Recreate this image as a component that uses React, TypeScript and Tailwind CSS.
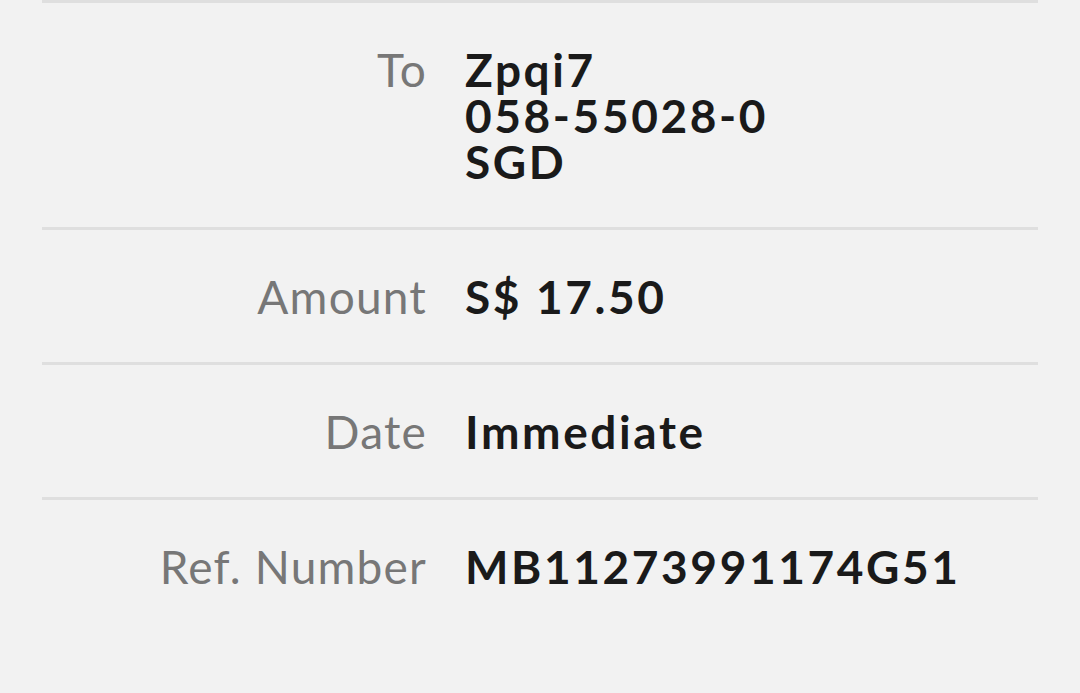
import React from "react";

const rows: { label: string; value: string[] }[] = [
  { label: "To", value: ["Zpqi7", "058-55028-0", "SGD"] },
  { label: "Amount", value: ["S$ 17.50"] },
  { label: "Date", value: ["Immediate"] },
  { label: "Ref. Number", value: ["MB11273991174G51"] },
];

export default function App() {
  return (
    <div
      className="w-[1080px] h-[693px] overflow-hidden bg-[#f2f2f2]"
      style={{ fontFamily: "Lato, 'Open Sans', sans-serif" }}
    >
      <div className="mx-[42px] w-[996px]">
        <div className="h-[3px] bg-[#dfdfdf]" />
        {rows.map((r) => (
          <div key={r.label}>
            <div className="flex gap-[38px] pt-[44px] pb-[42px]">
              <div className="w-[385px] shrink-0 text-right text-[46px] leading-[46px] tracking-[1.2px] text-[#777777]">
                {r.label}
              </div>
              <div className="text-[46px] leading-[46px] tracking-[2.6px] font-bold text-[#1a1a1a]">
                {r.value.map((v) => (
                  <div key={v}>{v}</div>
                ))}
              </div>
            </div>
            {r.label !== "Ref. Number" && <div className="h-[3px] bg-[#dfdfdf]" />}
          </div>
        ))}
      </div>
    </div>
  );
}
